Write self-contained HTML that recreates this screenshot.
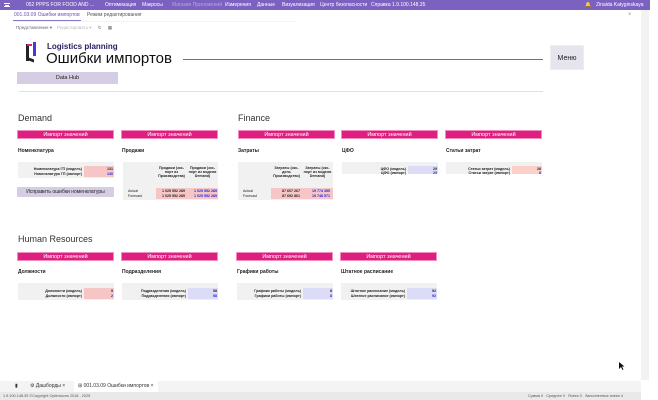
<!DOCTYPE html><html><head><meta charset="utf-8"><style>
*{margin:0;padding:0;box-sizing:border-box}
body{width:658px;height:400px;position:relative;overflow:hidden;background:#fff;font-family:"Liberation Sans",sans-serif;color:#222}
.a{position:absolute;white-space:nowrap}
.top{left:0;top:0;width:650px;height:10px;background:#7b62c0;color:#fff;font-size:5px;line-height:10px}
.btn{position:absolute;height:9px;background:#dd1f7f;color:#fff;font-size:5.5px;text-align:center;line-height:9px;width:97px;border:1px solid #f48cbf}
.lbl{position:absolute;font-size:5px;font-weight:bold}
.h{position:absolute;font-size:9px;color:#333}
.tb{position:absolute;background:#f1f1f1;font-size:3.6px}
.c{position:absolute;font-weight:bold;text-align:right}
</style></head><body>
<div class="a top"><span style="position:absolute;left:4px;top:3px;width:6px;height:4px;border-top:1px solid #fff;border-bottom:1px solid #fff"></span><span style="position:absolute;left:5px;top:4.5px;width:4px;height:1px;background:#fff"></span>
<span style="position:absolute;left:26px">052 PPPS FOR FOOD AND ...</span>
<span style="position:absolute;left:105px">Оптимизация</span><span style="position:absolute;left:142px">Макросы</span><span style="position:absolute;left:172px;color:#b6a8e0">Магазин Приложений</span><span style="position:absolute;left:225px">Измерения</span><span style="position:absolute;left:257px">Данные</span><span style="position:absolute;left:282px">Визуализация</span><span style="position:absolute;left:320px">Центр безопасности</span><span style="position:absolute;left:371px">Справка 1.9.100.148.35</span>
<span style="position:absolute;left:585px">🔔</span><span style="position:absolute;left:596px">Zinaida Katyginskaya</span></div>
<div class="a" style="left:641px;top:10px;width:8px;height:370px;background:#f2f2f2"></div>
<div class="a" style="left:14px;top:12px;font-size:5px;color:#6a55b5">001.03.09 Ошибки импортов</div>
<div class="a" style="left:13px;top:20px;width:68px;height:1px;background:#8a76cc"></div>
<div class="a" style="left:87px;top:12px;font-size:5px;color:#555">Режим редактирования</div>
<div class="a" style="left:628px;top:12px;font-size:6px;color:#999">×</div>
<div class="a" style="left:13px;top:21px;width:283px;height:1px;background:#f3f3f3"></div>
<div class="a" style="left:16px;top:25px;font-size:4.5px;color:#666">Представление ▾ &nbsp; &nbsp;<span style="color:#bbb">Редактировать ▾</span> &nbsp; &nbsp; ↻ &nbsp; &nbsp; ▦</div>
<div class="a" style="left:26px;top:44px;width:3px;height:17px;background:#222"></div>
<div class="a" style="left:26px;top:58px;width:8px;height:3px;background:#222;transform:skewY(20deg)"></div>
<div class="a" style="left:33px;top:42px;width:3px;height:14px;background:#4a3bd0"></div>
<div class="a" style="left:27px;top:44px;width:5px;height:2px;background:#e0207f"></div>
<div class="a" style="left:47px;top:42px;font-size:8px;font-weight:bold;color:#2a2060">Logistics planning</div>
<div class="a" style="left:46px;top:50px;font-size:15px;color:#111">Ошибки импортов</div>
<div class="a" style="left:183px;top:59px;width:360px;height:1px;background:#7b62c0"></div>
<div class="a" style="left:550px;top:45px;width:34px;height:25px;background:#e6e4ec;font-size:7px;text-align:center;line-height:25px;border:1px solid #eee">Меню</div>
<div class="a" style="left:17px;top:72px;width:101px;height:12px;background:#d5cde4;font-size:5.5px;text-align:center;line-height:12px">Data Hub</div>
<div class="a" style="left:19px;top:91px;width:524px;height:1px;background:#e2dcef"></div>

<div class="h" style="left:18px;top:113px">Demand</div>
<div class="h" style="left:238px;top:113px">Finance</div>
<div class="h" style="left:18px;top:234px">Human Resources</div>
<div class="btn" style="left:17px;top:130px">Импорт значений</div>
<div class="btn" style="left:121px;top:130px">Импорт значений</div>
<div class="btn" style="left:238px;top:130px">Импорт значений</div>
<div class="btn" style="left:341px;top:130px">Импорт значений</div>
<div class="btn" style="left:445px;top:130px">Импорт значений</div>
<div class="btn" style="left:17px;top:252px">Импорт значений</div>
<div class="btn" style="left:121px;top:252px">Импорт значений</div>
<div class="btn" style="left:236px;top:252px">Импорт значений</div>
<div class="btn" style="left:340px;top:252px">Импорт значений</div>
<div class="lbl" style="left:18px;top:148px">Номенклатура</div>
<div class="lbl" style="left:122px;top:148px">Продажи</div>
<div class="lbl" style="left:238px;top:148px">Затраты</div>
<div class="lbl" style="left:342px;top:148px">ЦФО</div>
<div class="lbl" style="left:446px;top:148px">Статьи затрат</div>
<div class="lbl" style="left:18px;top:269px">Должности</div>
<div class="lbl" style="left:122px;top:269px">Подразделения</div>
<div class="lbl" style="left:237px;top:269px">Графики работы</div>
<div class="lbl" style="left:341px;top:269px">Штатное расписание</div>

<div class="tb" style="left:18px;top:162px;width:96px;height:16px"><div class="c" style="left:4px;top:5px;width:60px">Номенклатура ГП (модель)</div><div class="c" style="left:4px;top:10px;width:60px">Номенклатура ГП (импорт)</div><div style="position:absolute;left:66px;top:4px;width:30px;height:11px;background:#f6c6c6"></div><div class="c" style="left:66px;top:5px;width:29px">131</div><div class="c" style="left:66px;top:10px;width:29px;color:#22d">130</div></div>
<div class="a" style="left:17px;top:187px;width:97px;height:10px;background:#d5cde4;font-size:5px;text-align:center;line-height:10px">Исправить ошибки номенклатуры</div>
<div class="tb" style="left:342px;top:162px;width:96px;height:12px"><div class="c" style="left:4px;top:5px;width:60px">ЦФО (модель)</div><div class="c" style="left:4px;top:9px;width:60px">ЦФО (импорт)</div><div style="position:absolute;left:66px;top:4px;width:30px;height:8px;background:#dcdcf6"></div><div class="c" style="left:66px;top:5px;width:29px">29</div><div class="c" style="left:66px;top:9px;width:29px;color:#22d">29</div></div>
<div class="tb" style="left:446px;top:162px;width:96px;height:12px"><div class="c" style="left:4px;top:5px;width:60px">Статьи затрат (модель)</div><div class="c" style="left:4px;top:9px;width:60px">Статьи затрат (импорт)</div><div style="position:absolute;left:66px;top:4px;width:30px;height:8px;background:#fad0c8"></div><div class="c" style="left:66px;top:5px;width:29px">28</div><div class="c" style="left:66px;top:9px;width:29px;color:#22d">8</div></div>
<div class="tb" style="left:18px;top:283px;width:96px;height:17px"><div class="c" style="left:4px;top:6px;width:60px">Должности (модель)</div><div class="c" style="left:4px;top:11px;width:60px">Должности (импорт)</div><div style="position:absolute;left:66px;top:5px;width:30px;height:11px;background:#f6c6c6"></div><div class="c" style="left:66px;top:6px;width:29px">9</div><div class="c" style="left:66px;top:11px;width:29px;color:#22d">2</div></div>
<div class="tb" style="left:122px;top:283px;width:96px;height:17px"><div class="c" style="left:4px;top:6px;width:60px">Подразделения (модель)</div><div class="c" style="left:4px;top:11px;width:60px">Подразделения (импорт)</div><div style="position:absolute;left:66px;top:5px;width:30px;height:11px;background:#dcdcf6"></div><div class="c" style="left:66px;top:6px;width:29px">58</div><div class="c" style="left:66px;top:11px;width:29px;color:#22d">58</div></div>
<div class="tb" style="left:237px;top:283px;width:96px;height:17px"><div class="c" style="left:4px;top:6px;width:60px">Графики работы (модель)</div><div class="c" style="left:4px;top:11px;width:60px">Графики работы (импорт)</div><div style="position:absolute;left:66px;top:5px;width:30px;height:11px;background:#dcdcf6"></div><div class="c" style="left:66px;top:6px;width:29px">8</div><div class="c" style="left:66px;top:11px;width:29px;color:#22d">8</div></div>
<div class="tb" style="left:341px;top:283px;width:96px;height:17px"><div class="c" style="left:4px;top:6px;width:60px">Штатное расписание (модель)</div><div class="c" style="left:4px;top:11px;width:60px">Штатное расписание (импорт)</div><div style="position:absolute;left:66px;top:5px;width:30px;height:11px;background:#dcdcf6"></div><div class="c" style="left:66px;top:6px;width:29px">92</div><div class="c" style="left:66px;top:11px;width:29px;color:#22d">92</div></div>
<div class="tb" style="left:123px;top:162px;width:95px;height:38px"><div style="position:absolute;left:33px;top:4px;width:31px;text-align:center;font-weight:bold">Продажи (экс-<br>порт из<br>Производства)</div><div style="position:absolute;left:64px;top:4px;width:31px;text-align:center;font-weight:bold">Продажи (экс-<br>порт из модели<br>Demand)</div><div style="position:absolute;left:33px;top:26px;width:62px;height:11px;background:#f6c6c6"></div><div class="a" style="left:5px;top:27px">Actual</div><div class="a" style="left:5px;top:32px">Forecast</div><div class="c" style="left:33px;top:27px;width:29px">1 025 552 289</div><div class="c" style="left:33px;top:32px;width:29px">1 025 552 289</div><div class="c" style="left:64px;top:27px;width:30px;color:#22d">1 025 552 289</div><div class="c" style="left:64px;top:32px;width:30px;color:#22d">1 025 552 289</div></div>
<div class="tb" style="left:238px;top:162px;width:95px;height:38px"><div style="position:absolute;left:33px;top:4px;width:31px;text-align:center;font-weight:bold">Затраты (экс-<br>дель<br>Производство)</div><div style="position:absolute;left:64px;top:4px;width:31px;text-align:center;font-weight:bold">Затраты (экс-<br>порт из модели<br>Demand)</div><div style="position:absolute;left:33px;top:26px;width:62px;height:11px;background:#f6c6c6"></div><div class="a" style="left:5px;top:27px">Actual</div><div class="a" style="left:5px;top:32px">Forecast</div><div class="c" style="left:33px;top:27px;width:29px">87 607 267</div><div class="c" style="left:33px;top:32px;width:29px">87 692 861</div><div class="c" style="left:64px;top:27px;width:28px;color:#22d">19 774 355</div><div class="c" style="left:64px;top:32px;width:28px;color:#22d">19 748 571</div></div>

<svg class="a" style="left:619px;top:362px" width="6" height="8" viewBox="0 0 6 8"><path d="M0 0 L0 7 L2 5 L3.5 8 L4.5 7.5 L3 4.5 L5.5 4.5 Z" fill="#111"/></svg>
<div class="a" style="left:0;top:381px;width:641px;height:11px;background:#f4f4f4;font-size:5px;line-height:11px;color:#333"><span style="position:absolute;left:15px">▮</span><span style="position:absolute;left:30px">⚙ Дашборды ×</span><span style="position:absolute;left:74px;background:#fff;padding:0 4px;">⊞ 001.03.09 Ошибки импортов ×</span></div>
<div class="a" style="left:0;top:392px;width:641px;height:8px;background:#e9e9e9;font-size:3.8px;line-height:8px;color:#555"><span style="position:absolute;left:3px">1.9.100.148.35 ©Copyright Optimacros 2018 - 2025</span><span style="position:absolute;left:528px">Сумма 0 &nbsp; Среднее 0 &nbsp; Ячеек 3 &nbsp; Заполненных ячеек 4</span></div>
</body></html>
